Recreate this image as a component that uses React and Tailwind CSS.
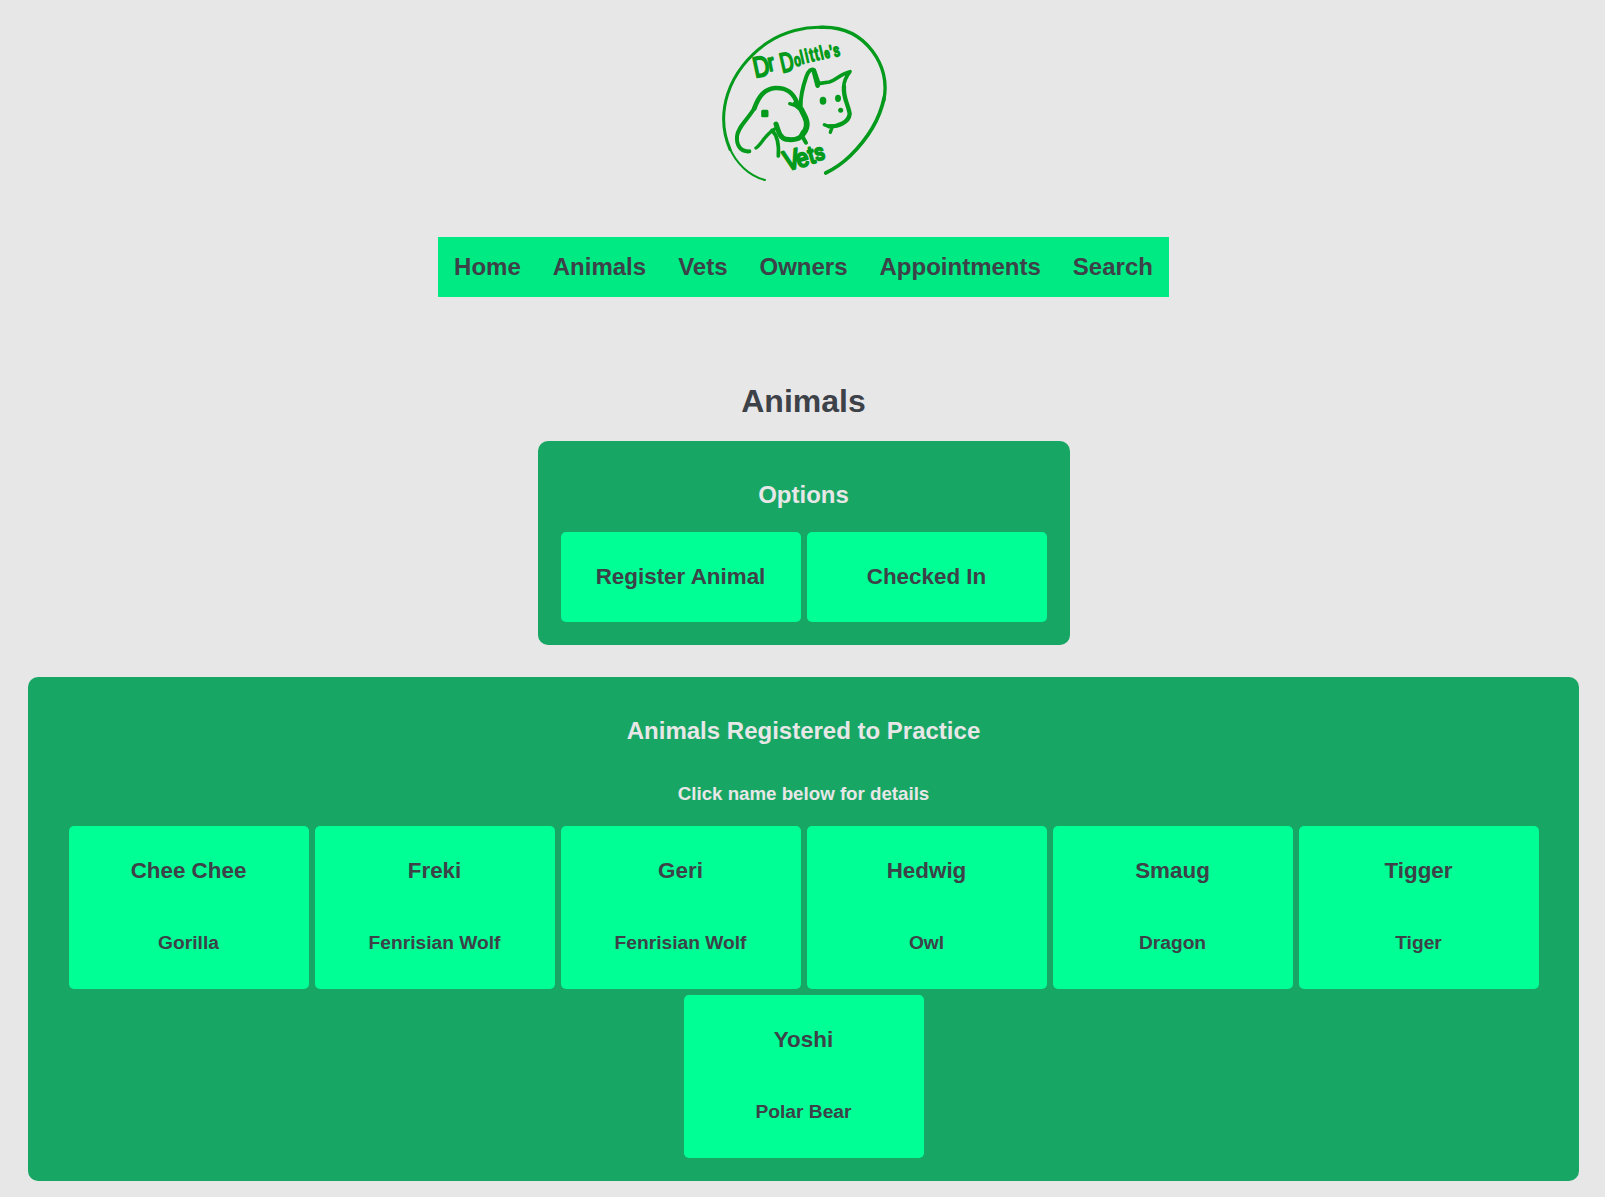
const NAV = ['Home', 'Animals', 'Vets', 'Owners', 'Appointments', 'Search'];

const ANIMALS = [
  ['Chee Chee', 'Gorilla'],
  ['Freki', 'Fenrisian Wolf'],
  ['Geri', 'Fenrisian Wolf'],
  ['Hedwig', 'Owl'],
  ['Smaug', 'Dragon'],
  ['Tigger', 'Tiger'],
  ['Yoshi', 'Polar Bear'],
];

function Logo() {
  return (
    <svg
      viewBox="-6 0 573 540"
      className="block h-[180px] w-[191px]"
      fill="none"
      stroke="#049a1b"
      strokeLinecap="round"
      strokeLinejoin="round"
    >
      {/* ring */}
      <path strokeWidth="6" d="M165 495C118 483 78 446 57 395" />
      <path strokeWidth="9" d="M60 403C38 352 34 297 53 237C72 177 116 121 172 83C222 50 285 34 340 37" />
      <path strokeWidth="10" d="M330 37C395 34 450 59 487 108C523 156 532 205 521 258" />
      <path strokeWidth="11" d="M522 250C509 312 470 374 420 423C395 447 372 462 347 474" />
      {/* dog */}
      <path strokeWidth="12" d="M118 409C92 411 79 392 81 364C84 335 112 315 134 278" />
      <path strokeWidth="14" d="M133 280C146 244 162 222 196 219C234 218 252 236 262 266" />
      <path strokeWidth="10" d="M239 266L264 274" />
      <path strokeWidth="17" d="M256 267L273 282L284 304C296 328 291 344 277 359" />
      <path strokeWidth="15" d="M279 357C270 374 246 376 228 373C207 367 205 345 198 327" />
      <path strokeWidth="10" d="M138 399C156 386 162 362 194 342" />
      <path strokeWidth="11" d="M186 346C203 362 207 392 205 423" />
      <path strokeWidth="12" d="M278 352L278 366L288 383" />
      <rect x="158" y="289" width="13" height="13" strokeWidth="9" fill="#049a1b" />
      {/* cat */}
      <path strokeWidth="12" d="M272 275C271 240 282 205 289 185C295 168 304 160 312 165L326 205" />
      <path strokeWidth="14" d="M312 170L323 212" />
      <path strokeWidth="11" d="M325 206L358 201C379 195 390 177 420 170C408 185 401 197 401 218" />
      <path strokeWidth="13" d="M402 215C398 246 417 274 419 297C416 322 386 335 357 334" />
      <path strokeWidth="10" d="M366 333C356 335 349 332 343 329M366 338L361 352" />
      <g fill="#049a1b" stroke="none">
        <ellipse cx="339" cy="257" rx="10" ry="12" />
        <ellipse cx="384" cy="250" rx="9" ry="11" />
        <circle cx="392" cy="286" r="7.5" />
      </g>
      {/* lettering */}
      <g
        fill="#049a1b"
        strokeWidth="6"
        className="font-['Liberation_Sans',Arial,sans-serif] font-normal"
      >
        <text transform="translate(136 188) rotate(-12) scale(.78 1)" fontSize="86">
          D<tspan fontSize="72" dx="-4" dy="-10">r</tspan>
        </text>
        <text transform="translate(217 173) rotate(-13) scale(.68 1)" fontSize="82">
          D<tspan fontSize="50" dx="4" dy="-10">o</tspan>
          <tspan fontSize="56" dx="3 8 8 8 8" dy="-3">littl</tspan>
          <tspan fontSize="40" dx="5">e</tspan>
          <tspan fontSize="52" dx="4 5" dy="2">’s</tspan>
        </text>
        <text transform="translate(229 468) rotate(-15) scale(.86 1)" fontSize="84" strokeWidth="7">
          V<tspan fontSize="76" dx="-12">e</tspan>
          <tspan fontSize="74" dx="2" dy="-2">t</tspan>
          <tspan fontSize="66" dx="2" dy="-4">s</tspan>
        </text>
      </g>
    </svg>
  );
}

function Card({ title, children }) {
  return (
    <a href="#" className="block w-60 rounded-[5px] bg-[#00ff95] text-center text-[#3d4148]">
      <h3 className="mt-8 text-[22.4px] leading-[26px]">{title}</h3>
      {children}
    </a>
  );
}

export default function App() {
  return (
    <div className="flex h-[1197px] flex-col items-center bg-[#e7e7e7] pl-7 pr-[26px] font-['Liberation_Sans',Arial,sans-serif] font-bold text-[#3d4148]">
      <header className="mt-[15px] flex flex-col items-center">
        <Logo />
        <nav className="mt-[42px] flex h-[60px] items-center bg-[#00ea84]">
          {NAV.map((item) => (
            <a key={item} href="#" className="px-4 text-2xl leading-7">
              {item}
            </a>
          ))}
        </nav>
      </header>

      <h1 className="mt-[86px] text-[32px] leading-9">Animals</h1>

      <section className="mt-[22px] w-[532px] rounded-[10px] bg-[#18a665] px-[23px] pb-[23px] pt-10">
        <h2 className="text-center text-2xl leading-7 text-[#e7e7e7]">Options</h2>
        <div className="mt-[23px] flex gap-1.5">
          {['Register Animal', 'Checked In'].map((name) => (
            <Card key={name} title={name}>
              <div className="h-8" />
            </Card>
          ))}
        </div>
      </section>

      <section className="mt-8 w-full rounded-[10px] bg-[#18a665] pb-[23px] pt-10 text-center">
        <h2 className="text-2xl leading-7 text-[#e7e7e7]">Animals Registered to Practice</h2>
        <h4 className="mt-[38px] text-[18.72px] leading-[22px] text-[#e7e7e7]">Click name below for details</h4>
        <div className="mt-[21px] flex flex-wrap justify-center gap-1.5">
          {ANIMALS.map(([name, species]) => (
            <Card key={name} title={name}>
              <p className="mb-[35px] mt-12 text-[19.2px] leading-[22px]">{species}</p>
            </Card>
          ))}
        </div>
      </section>
    </div>
  );
}
